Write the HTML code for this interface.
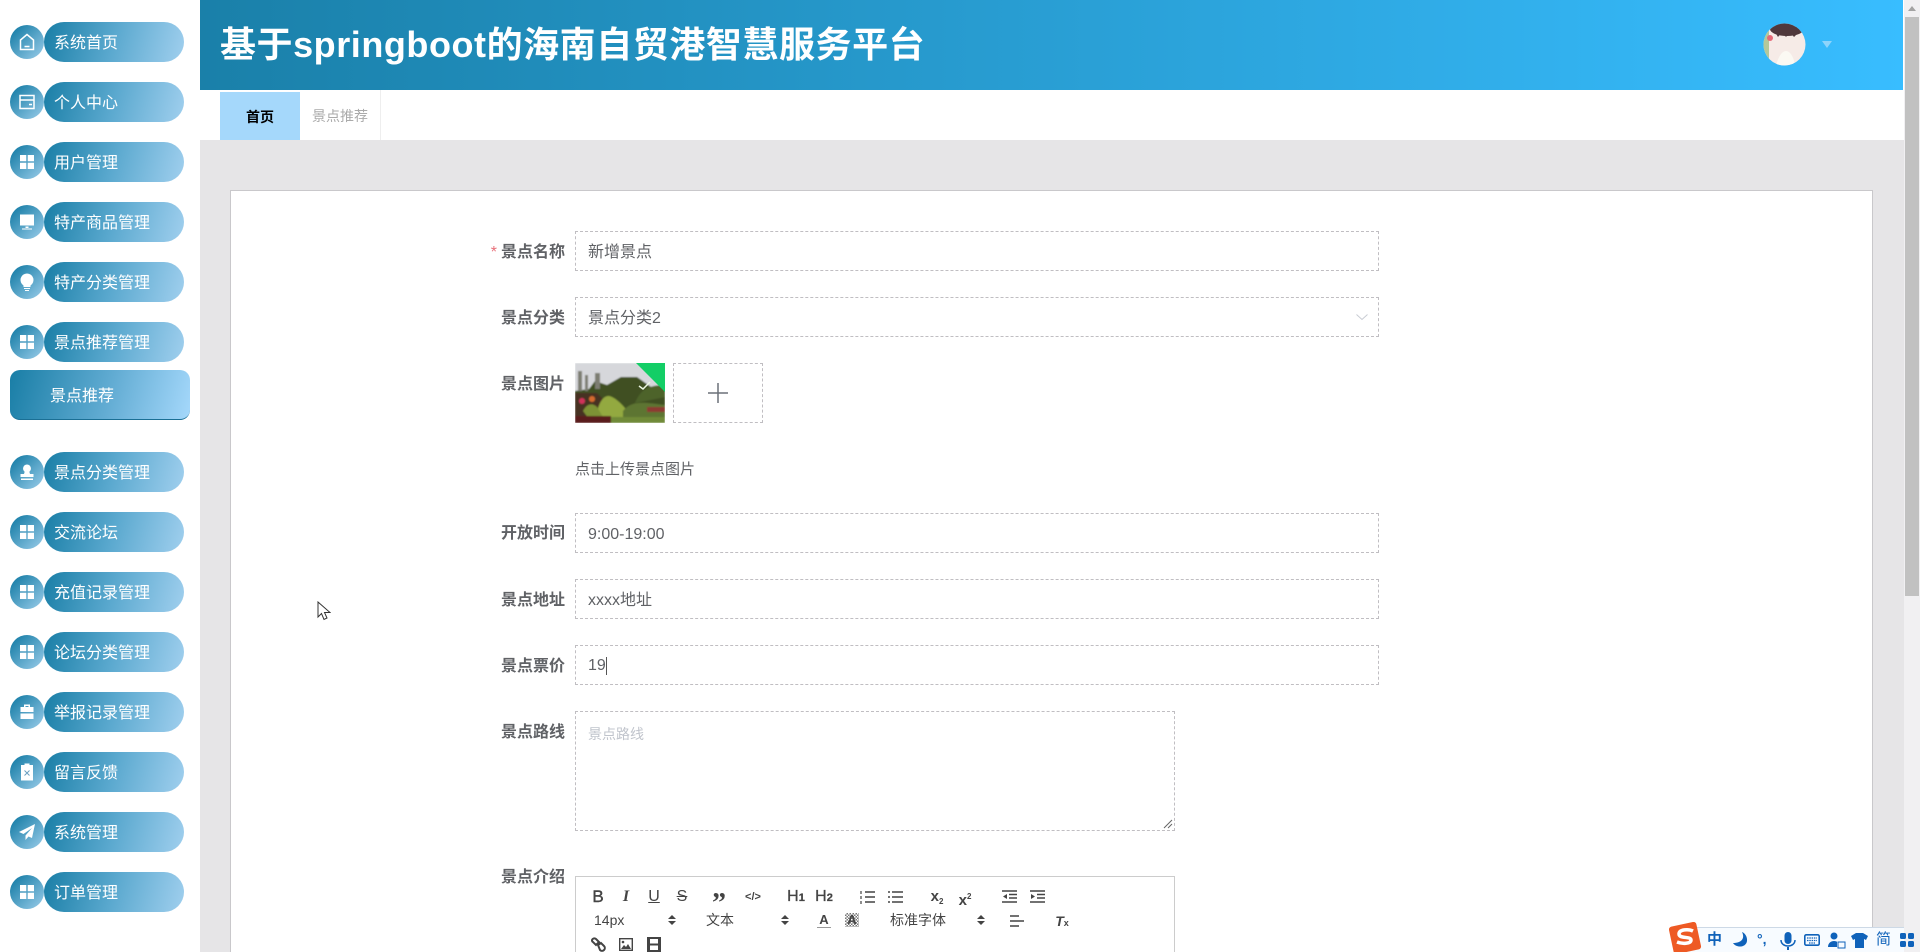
<!DOCTYPE html>
<html lang="zh-CN"><head><meta charset="utf-8"><title>景点推荐</title>
<style>
*{box-sizing:border-box;margin:0;padding:0}
html,body{width:1920px;height:952px;overflow:hidden;background:#fff;font-family:"Liberation Sans","Noto Sans CJK SC",sans-serif}
.a{position:absolute}
.c{position:absolute;left:10px;width:34px;height:34px;border-radius:50%;background:linear-gradient(135deg,#1a7fa8 10%,#9bcdea 100%)}
.c svg{position:absolute;left:7px;top:7px;width:20px;height:20px}
.p{position:absolute;left:44px;width:140px;height:40px;border-radius:20px;background:linear-gradient(105deg,#197ea6 0%,#5ba9cf 50%,#a0cfee 100%);color:#fff;font-size:16px;line-height:44px;padding-left:10px;white-space:nowrap}
.act{position:absolute;left:10px;top:370px;width:180px;height:50px;border-radius:10px;background:linear-gradient(105deg,#197ea6 0%,#62acd3 55%,#a5d8fb 100%);border-bottom:1px solid #1a6f95;color:#fff;font-size:16px;line-height:54px;padding-left:40px}
.l{position:absolute;width:115px;left:450px;text-align:right;font-size:16px;font-weight:bold;color:#606266;line-height:22px;white-space:nowrap}
.i{position:absolute;left:575px;width:804px;height:40px;border:1px dashed #c0bec2;font-size:16px;color:#606266;line-height:42px;padding-left:12px;background:#fff}
.t{position:absolute;color:#333;font-size:14px;line-height:18px}
.b{position:absolute;font-family:"Liberation Sans",sans-serif;color:#444;line-height:18px;text-align:center}
</style></head><body>
<!-- sidebar -->
<div class="c" style="top:25px"><svg viewBox="0 0 20 20" fill="none" stroke="#fff" stroke-width="1.5"><path d="M10 2.5 3.5 8v9.5h13V8zM7.5 14.5h5"/></svg></div><div class="p" style="top:22px">系统首页</div>
<div class="c" style="top:85px"><svg viewBox="0 0 20 20" fill="none" stroke="#fff" stroke-width="1.5"><path d="M3 3.5h14v13H3zM3 8h14M12 12.5h3"/></svg></div><div class="p" style="top:82px">个人中心</div>
<div class="c" style="top:145px"><svg viewBox="0 0 20 20" fill="#fff"><path d="M3 3h6.3v6.3H3zM10.7 3H17v6.3h-6.3zM3 10.7h6.3V17H3zM10.7 10.7H17V17h-6.3z"/></svg></div><div class="p" style="top:142px">用户管理</div>
<div class="c" style="top:205px"><svg viewBox="0 0 20 20" fill="#fff"><path d="M3 2.5h14v11H3zM8.5 14.5h3V16h-3zM5 16.5h10v1H5z"/></svg></div><div class="p" style="top:202px">特产商品管理</div>
<div class="c" style="top:265px"><svg viewBox="0 0 20 20" fill="#fff"><path d="M10 1.5a6.5 6.5 0 0 0-3.5 12v1.5h7v-1.5a6.5 6.5 0 0 0-3.5-12zM7 16h6v1H7zM8 18h4v1H8z"/></svg></div><div class="p" style="top:262px">特产分类管理</div>
<div class="c" style="top:325px"><svg viewBox="0 0 20 20" fill="#fff"><path d="M3 3h6.3v6.3H3zM10.7 3H17v6.3h-6.3zM3 10.7h6.3V17H3zM10.7 10.7H17V17h-6.3z"/></svg></div><div class="p" style="top:322px">景点推荐管理</div>
<div class="act">景点推荐</div>
<div class="c" style="top:455px"><svg viewBox="0 0 20 20" fill="#fff"><path d="M10 2.5a4 4 0 0 0-2.3 7.2L7 12H3.5v3h13v-3H13l-.7-2.3A4 4 0 0 0 10 2.5zM4 16.5h12V18H4z"/></svg></div><div class="p" style="top:452px">景点分类管理</div>
<div class="c" style="top:515px"><svg viewBox="0 0 20 20" fill="#fff"><path d="M3 3h6.3v6.3H3zM10.7 3H17v6.3h-6.3zM3 10.7h6.3V17H3zM10.7 10.7H17V17h-6.3z"/></svg></div><div class="p" style="top:512px">交流论坛</div>
<div class="c" style="top:575px"><svg viewBox="0 0 20 20" fill="#fff"><path d="M3 3h6.3v6.3H3zM10.7 3H17v6.3h-6.3zM3 10.7h6.3V17H3zM10.7 10.7H17V17h-6.3z"/></svg></div><div class="p" style="top:572px">充值记录管理</div>
<div class="c" style="top:635px"><svg viewBox="0 0 20 20" fill="#fff"><path d="M3 3h6.3v6.3H3zM10.7 3H17v6.3h-6.3zM3 10.7h6.3V17H3zM10.7 10.7H17V17h-6.3z"/></svg></div><div class="p" style="top:632px">论坛分类管理</div>
<div class="c" style="top:695px"><svg viewBox="0 0 20 20" fill="#fff"><path d="M7 2.5h6V5h3.5v5h-13V5H7zM8.5 4v1h3V4zM3.5 11.5h13V17h-13z"/></svg></div><div class="p" style="top:692px">举报记录管理</div>
<div class="c" style="top:755px"><svg viewBox="0 0 20 20"><path fill="#fff" d="M7.5 1.5h5V3H16v15.5H4V3h3.5z"/><path stroke="#6a9fc0" stroke-width="1" fill="none" d="M7.5 8.5l5 5M12.500 8.500l-5 5"/></svg></div><div class="p" style="top:752px">留言反馈</div>
<div class="c" style="top:815px"><svg viewBox="0 0 20 20" fill="#fff"><path d="M18 2 2 10l4.500 2L15 6l-6.500 7.500V18l3-3.500 3.500 1.500z"/></svg></div><div class="p" style="top:812px">系统管理</div>
<div class="c" style="top:875px"><svg viewBox="0 0 20 20" fill="#fff"><path d="M3 3h6.300v6.300H3zM10.700 3H17v6.300h-6.300zM3 10.700h6.300V17H3zM10.700 10.700H17V17h-6.300z"/></svg></div><div class="p" style="top:872px">订单管理</div>

<!-- main bg -->
<div class="a" style="left:200px;top:140px;width:1704px;height:812px;background:#e6e5e7"></div>
<!-- header -->
<div class="a" style="left:200px;top:0;width:1703px;height:90px;background:linear-gradient(90deg,#1a80a9 0%,#38bdff 100%)"></div>
<div class="a" style="left:220px;top:19px;color:#fff;font-size:36px;font-weight:bold;line-height:52px;white-space:nowrap;letter-spacing:.55px">基于springboot的海南自贸港智慧服务平台</div>
<svg class="a" style="left:1763px;top:23px" width="43" height="43" viewBox="0 0 43 43"><defs><clipPath id="av"><circle cx="21.500" cy="21.500" r="21"/></clipPath></defs><g clip-path="url(#av)"><rect width="43" height="43" fill="#f6ebe7"/><rect x="0" y="8" width="6" height="30" fill="#b4c89a"/><ellipse cx="24" cy="6" rx="17" ry="7" fill="#50383c"/><path d="M12 9l3 5 4-5 4 5 4-5 4 5 5-5V4H12z" fill="#50383c"/><circle cx="7" cy="15" r="3" fill="#e66a78"/><path d="M13 43c2-9 6-15 10-15s8 6 9 15z" fill="#fbf9f3"/></g></svg>
<div class="a" style="left:1822px;top:41px;width:0;height:0;border-left:5px solid transparent;border-right:5px solid transparent;border-top:7px solid #8ed4fb"></div>
<!-- tabs -->
<div class="a" style="left:220px;top:92px;width:80px;height:48px;background:#a5d8fb;color:#000;font-size:14px;font-weight:bold;text-align:center;line-height:50px">首页</div>
<div class="a" style="left:300px;top:90px;width:81px;height:50px;background:#fff;border-right:1px solid #eee;color:#aaa;font-size:14px;text-align:center;line-height:52px">景点推荐</div>
<!-- card -->
<div class="a" style="left:230px;top:190px;width:1643px;height:762px;background:#fff;border:1px solid #c9c8cb;border-bottom:0"></div>

<div class="l" style="top:242px"><span style="color:#e8707a;font-weight:normal;margin-right:4px">*</span>景点名称</div>
<div class="i" style="top:231px">新增景点</div>
<div class="l" style="top:308px">景点分类</div>
<div class="i" style="top:297px">景点分类2<svg class="a" style="left:779px;top:15px" width="14" height="8" viewBox="0 0 14 8" fill="none" stroke="#c8ccd3" stroke-width="1"><path d="M1.500 1.500 7 6.500l5.500-5"/></svg></div>
<div class="l" style="top:374px">景点图片</div>
<svg class="a" style="left:575px;top:363px" width="90" height="60" viewBox="0 0 90 60"><defs><clipPath id="ph"><rect width="90" height="60"/></clipPath><filter id="bl"><feGaussianBlur stdDeviation=".7"/></filter></defs><g clip-path="url(#ph)"><g filter="url(#bl)"><rect width="90" height="60" fill="#d6d7db"/><path d="M0 28l14-2 6-8 12 4 14-8 16 0 28 20v26H0z" fill="#3f5024"/><path d="M3 8h4v20H3zM10 12h3v16h-3zM20 10h5v16h-5z" fill="#7d7d72"/><path d="M0 30h22l8 8-6 22H0z" fill="#463020"/><path d="M22 50c2-12 8-20 15-16 8 4 14 12 20 20l-4 6H22z" fill="#93a93f"/><path d="M8 48c4-8 10-8 14-4l6 10-14 2z" fill="#7d9234"/><path d="M48 48c10-12 24-8 42-6v18H48z" fill="#5d7530"/><path d="M60 40c5-12 12-18 30-18v12z" fill="#4e6329"/><path d="M0 53h36v7H0z" fill="#5a1f1d"/><path d="M36 54h54v6H36z" fill="#6f8a38"/><path d="M72 44h18v5H72z" fill="#8d3a30"/><circle cx="7" cy="38" r="3" fill="#d0315a"/><circle cx="17" cy="36" r="3" fill="#d46a2e"/></g><path d="M61 0h29v29z" fill="#13ce66"/><path d="M64 23l4 3 7-7" fill="none" stroke="#eaf5e0" stroke-width="1.500"/></g></svg>
<div class="a" style="left:673px;top:363px;width:90px;height:60px;border:1px dashed #c0bec2"><svg class="a" style="left:34px;top:19px" width="20" height="20" viewBox="0 0 20 20" stroke="#6b7078" stroke-width="1.500"><path d="M0 10h20M10 0v20"/></svg></div>
<div class="a" style="left:575px;top:460px;font-size:15px;color:#606266;line-height:20px;white-space:nowrap">点击上传景点图片</div>

<div class="l" style="top:523px">开放时间</div>
<div class="i" style="top:513px">9:00-19:00</div>
<div class="l" style="top:590px">景点地址</div>
<div class="i" style="top:579px">xxxx地址</div>
<div class="l" style="top:656px">景点票价</div>
<div class="i" style="top:645px;line-height:40px">19<span class="a" style="left:30px;top:11px;width:1px;height:18px;background:#555"></span></div>
<div class="l" style="top:722px">景点路线</div>
<div class="a" style="left:575px;top:711px;width:600px;height:120px;border:1px dashed #c0bec2;color:#c0c4cc;font-size:14px;line-height:20px;padding:12px 12px"><span>景点路线</span>
<svg class="a" style="right:1px;bottom:1px" width="10" height="10" viewBox="0 0 10 10" stroke="#666" stroke-width="1"><path d="M1 9l8-8M5 9l4-4"/></svg></div>
<div class="l" style="top:867px">景点介绍</div>

<!-- editor -->
<div class="a" style="left:575px;top:876px;width:600px;height:76px;border:1px solid #ccc;border-bottom:0"></div>
<div class="b" style="left:590px;top:888px;width:16px;font-size:17px;-webkit-text-stroke:.4px #444">B</div>
<div class="b" style="left:618px;top:888px;width:16px;font-size:16px;font-style:italic;font-weight:bold;font-family:'Liberation Serif',serif">I</div>
<div class="b" style="left:646px;top:888px;width:16px;font-size:16px;text-decoration:underline">U</div>
<div class="b" style="left:674px;top:888px;width:16px;font-size:16px;text-decoration:line-through">S</div>
<div class="b" style="left:709px;top:891px;width:20px;font-size:28px;font-weight:bold;line-height:26px;font-family:'Liberation Serif',serif">”</div>
<div class="b" style="left:743px;top:888px;width:20px;font-size:11px;font-weight:bold">&lt;/&gt;</div>
<div class="b" style="left:787px;top:888px;width:18px;font-size:16px;white-space:nowrap;-webkit-text-stroke:.3px #444">H<span style="font-size:11px;font-weight:bold">1</span></div>
<div class="b" style="left:815px;top:888px;width:18px;font-size:16px;white-space:nowrap;-webkit-text-stroke:.3px #444">H<span style="font-size:11px;font-weight:bold">2</span></div>
<svg class="a" style="left:860px;top:890px" width="15" height="14" viewBox="0 0 15 14" stroke="#444" stroke-width="1.500"><path d="M5 2h10M5 7h10M5 12h10"/><path d="M1 1v3M1 6v3M1 11v3" stroke-width="1.200"/></svg>
<svg class="a" style="left:888px;top:890px" width="15" height="14" viewBox="0 0 15 14" stroke="#444" stroke-width="1.500"><path d="M4 2h11M4 7h11M4 12h11M0 2h2M0 7h2M0 12h2"/></svg>
<div class="b" style="left:927px;top:888px;width:20px;font-size:15px;font-weight:bold;white-space:nowrap">x<span style="font-size:8px;vertical-align:-3px">2</span></div>
<div class="b" style="left:955px;top:888px;width:20px;font-size:15px;font-weight:bold;white-space:nowrap">x<span style="font-size:8px;vertical-align:6px">2</span></div>
<svg class="a" style="left:1002px;top:890px" width="15" height="13" viewBox="0 0 15 13" stroke="#444" stroke-width="1.500"><path d="M0 1h15M7 4.500h8M7 8h8M0 12h15"/><path d="M5 4v5L1 6.500z" fill="#444" stroke="none"/></svg>
<svg class="a" style="left:1030px;top:890px" width="15" height="13" viewBox="0 0 15 13" stroke="#444" stroke-width="1.500"><path d="M0 1h15M7 4.500h8M7 8h8M0 12h15"/><path d="M1 4v5l4-2.500z" fill="#444" stroke="none"/></svg>

<div class="t" style="left:594px;top:911px;font-size:14px;color:#444">14px</div>
<div class="a" style="left:668px;top:915px;width:0;height:0;border-left:4px solid transparent;border-right:4px solid transparent;border-bottom:4px solid #444"></div>
<div class="a" style="left:668px;top:921px;width:0;height:0;border-left:4px solid transparent;border-right:4px solid transparent;border-top:4px solid #444"></div>
<div class="t" style="left:706px;top:911px;color:#444">文本</div>
<div class="a" style="left:781px;top:915px;width:0;height:0;border-left:4px solid transparent;border-right:4px solid transparent;border-bottom:4px solid #444"></div>
<div class="a" style="left:781px;top:921px;width:0;height:0;border-left:4px solid transparent;border-right:4px solid transparent;border-top:4px solid #444"></div>
<div class="b" style="left:816px;top:911px;width:16px;font-size:13px;font-weight:bold">A</div>
<div class="a" style="left:817px;top:927px;width:14px;height:1px;background:#999"></div>
<div class="b" style="left:845px;top:913px;width:14px;height:14px;font-size:13px;font-weight:bold;line-height:14px;background:repeating-conic-gradient(#777 0 25%,#fff 0 50%) 0 0/3px 3px">A</div>
<div class="t" style="left:890px;top:911px;color:#444">标准字体</div>
<div class="a" style="left:977px;top:915px;width:0;height:0;border-left:4px solid transparent;border-right:4px solid transparent;border-bottom:4px solid #444"></div>
<div class="a" style="left:977px;top:921px;width:0;height:0;border-left:4px solid transparent;border-right:4px solid transparent;border-top:4px solid #444"></div>
<svg class="a" style="left:1010px;top:915px" width="14" height="12" viewBox="0 0 14 12" stroke="#444" stroke-width="1.500"><path d="M0 1h9M0 6h14M0 11h9"/></svg>
<div class="b" style="left:1054px;top:912px;width:16px;font-size:14px;font-style:italic;font-weight:bold;white-space:nowrap">T<span style="font-size:9px;font-style:normal">x</span></div>
<svg class="a" style="left:590px;top:937px" width="16" height="15" viewBox="0 0 16 15" fill="none" stroke="#444" stroke-width="2"><path d="M2 3a2.500 2.500 0 0 1 4-1l3 3-3 3-3-3a2 2 0 0 1-1-2zM8 8l3-2 3 3a2.500 2.500 0 0 1-4 4z"/></svg>
<svg class="a" style="left:619px;top:938px" width="14" height="13" viewBox="0 0 14 13"><path d="M.7.700h12.600v11.600H.7z" fill="none" stroke="#444" stroke-width="1.400"/><path d="M2 11l3-4 2 2 2-3 3 5z" fill="#444"/><circle cx="4" cy="4" r="1.300" fill="#444"/></svg>
<svg class="a" style="left:647px;top:937px" width="14" height="15" viewBox="0 0 14 15"><path fill="#444" d="M0 0h14v15H0z"/><path fill="#fff" d="M3 2h8v4.500H3zM3 8.500h8V13H3z"/></svg>

<!-- cursor -->
<svg class="a" style="left:317px;top:601px" width="14" height="20" viewBox="0 0 14 20"><path d="M1 1v15l3.500-3.500L7 18.500l3-1.500-2.500-5.500H13z" fill="#fff" stroke="#333" stroke-width="1"/></svg>

<!-- scrollbar -->
<div class="a" style="left:1904px;top:0;width:16px;height:952px;background:#f1f0f2"></div>
<div class="a" style="left:1908px;top:6px;width:0;height:0;border-left:4px solid transparent;border-right:4px solid transparent;border-bottom:5px solid #a3a3a3"></div>
<div class="a" style="left:1905px;top:17px;width:14px;height:579px;background:#c1c1c1"></div>

<!-- IME bar -->
<div class="a" style="left:1680px;top:927px;width:224px;height:25px;background:#f7fbff;border-top:1px solid #cdd9e6;border-left:1px solid #cdd9e6"></div>
<svg class="a" style="left:1669px;top:922px" width="34" height="30" viewBox="0 0 34 30"><rect x="2" y="2" width="28" height="28" rx="3" transform="rotate(-12 16 16)" fill="#ee5a24"/><path d="M24 9c-4-2-14-2-14 3s12 2 12 6-9 4-14 2" fill="none" stroke="#fff" stroke-width="3.500"/></svg>
<div class="a" style="left:1707px;top:931px;font-size:15px;line-height:18px;color:#0f62ba;font-weight:bold">中</div>
<svg class="a" style="left:1732px;top:931px" width="16" height="18" viewBox="0 0 16 18" fill="#0f62ba"><path d="M10 1c3 6 0 11-9 11 3 5 13 5 14-2 .5-4-2-8-5-9z"/></svg>
<div class="a" style="left:1757px;top:930px;font-size:14px;line-height:18px;color:#0f62ba;font-weight:bold">°,</div>
<svg class="a" style="left:1780px;top:932px" width="16" height="19" viewBox="0 0 16 19" fill="#0f62ba"><rect x="4.500" y="0" width="7" height="12" rx="3.500"/><path d="M1 8c0 8 14 8 14 0" fill="none" stroke="#0f62ba" stroke-width="1.500"/><path d="M7 15h2v3H7z"/></svg>
<svg class="a" style="left:1804px;top:934px" width="16" height="12" viewBox="0 0 16 12"><rect x=".8" y=".8" width="14.400" height="10.400" rx="1.500" fill="none" stroke="#0f62ba" stroke-width="1.600"/><path d="M3 4h10M3 6.500h10M5 9h6" stroke="#0f62ba" stroke-width="1.300" stroke-dasharray="1.500 .8"/></svg>
<svg class="a" style="left:1828px;top:932px" width="18" height="17" viewBox="0 0 18 17" fill="#0f62ba"><circle cx="6" cy="4" r="3.500"/><path d="M0 15c0-8 12-8 12 0z"/><path d="M9 9h9v8H9z" fill="#f7fbff"/><path d="M10 10h7v6h-7z" fill="none" stroke="#0f62ba"/></svg>
<svg class="a" style="left:1851px;top:933px" width="17" height="15" viewBox="0 0 17 15" fill="#0f62ba"><path d="M5 0h7l5 3-2 4-2-1v9H4V6L2 7 0 3z"/></svg>
<div class="a" style="left:1876px;top:931px;font-size:15px;line-height:18px;color:#0f62ba">简</div>
<svg class="a" style="left:1900px;top:933px" width="14" height="14" viewBox="0 0 14 14" fill="#0f62ba"><rect width="6" height="6" rx="1.500"/><rect x="8" width="6" height="6" rx="1.500"/><rect y="8" width="6" height="6" rx="1.500"/><rect x="8" y="8" width="6" height="6" rx="1.500"/></svg>
</body></html>
